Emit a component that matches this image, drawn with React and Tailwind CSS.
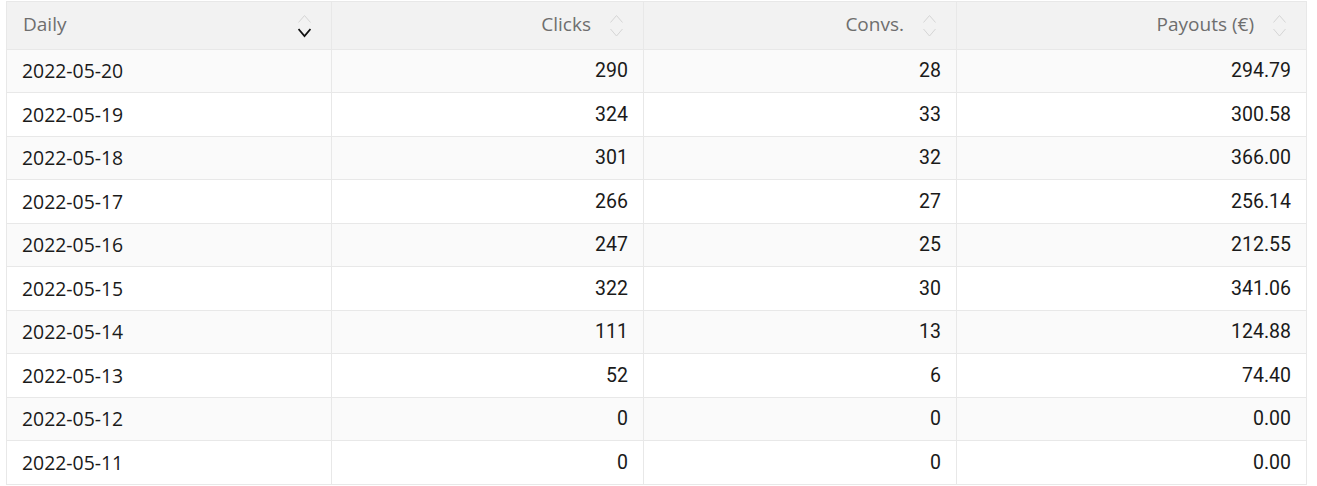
import React from "react";

const rows = [
  ["2022-05-20", "290", "28", "294.79"],
  ["2022-05-19", "324", "33", "300.58"],
  ["2022-05-18", "301", "32", "366.00"],
  ["2022-05-17", "266", "27", "256.14"],
  ["2022-05-16", "247", "25", "212.55"],
  ["2022-05-15", "322", "30", "341.06"],
  ["2022-05-14", "111", "13", "124.88"],
  ["2022-05-13", "52", "6", "74.40"],
  ["2022-05-12", "0", "0", "0.00"],
  ["2022-05-11", "0", "0", "0.00"],
];

function SortIcon({ active }) {
  return (
    <svg width="13" height="24" viewBox="0 0 13 24" className="shrink-0">
      <polyline
        points="0.5,8.5 6.5,1.5 12.5,8.5"
        fill="none"
        stroke={active === "up" ? "#111" : "#d6d6d6"}
        strokeWidth={active === "up" ? 1.8 : 1}
      />
      <polyline
        points="0.5,15 6.5,22 12.5,15"
        fill="none"
        stroke={active === "down" ? "#111" : "#d6d6d6"}
        strokeWidth={active === "down" ? 1.8 : 1}
      />
    </svg>
  );
}

const textFont = { fontFamily: '"Open Sans", "Noto Sans", sans-serif' };
const numFont = { fontFamily: 'Roboto, "Liberation Sans", sans-serif' };

export default function App() {
  return (
    <div className="bg-white w-[1317px] h-[486px] overflow-hidden pl-[6px] pt-[1px]">
      <div className="w-[1301px] border-l border-t border-r border-[#e8e8e8]">
        <div
          className="grid grid-cols-[325px_312px_313px_349px] h-[48px] bg-[#f2f2f2] border-b border-[#e8e8e8] text-[19px] text-[#6e6e6e]"
          style={textFont}
        >
          <div className="flex items-center justify-between pl-[16px] pr-[20px] border-r border-[#e8e8e8]">
            <span className="-mt-[2px]">Daily</span>
            <SortIcon active="down" />
          </div>
          <div className="flex items-center justify-end gap-[19px] pr-[20px] border-r border-[#e8e8e8]">
            <span className="-mt-[2px]">Clicks</span>
            <SortIcon />
          </div>
          <div className="flex items-center justify-end gap-[19px] pr-[20px] border-r border-[#e8e8e8]">
            <span className="-mt-[2px]">Convs.</span>
            <SortIcon />
          </div>
          <div className="flex items-center justify-end gap-[19px] pr-[20px]">
            <span className="-mt-[2px]">Payouts (€)</span>
            <SortIcon />
          </div>
        </div>
        {rows.map((r, i) => (
          <div
            key={r[0]}
            className={
              "grid grid-cols-[325px_312px_313px_349px] border-b border-[#e8e8e8] text-[#1a1a1a] " +
              (i % 2 === 0 ? "h-[43px] bg-[#fafafa]" : "h-[44px] bg-white")
            }
          >
            <div
              className="flex items-center pl-[15px] border-r border-[#e8e8e8] text-[19.4px]"
              style={textFont}
            >
              {r[0]}
            </div>
            <div
              className="flex items-center justify-end pr-[15px] border-r border-[#e8e8e8] text-[19.5px]"
              style={numFont}
            >
              {r[1]}
            </div>
            <div
              className="flex items-center justify-end pr-[15px] border-r border-[#e8e8e8] text-[19.5px]"
              style={numFont}
            >
              {r[2]}
            </div>
            <div
              className="flex items-center justify-end pr-[15px] text-[19.5px]"
              style={numFont}
            >
              {r[3]}
            </div>
          </div>
        ))}
      </div>
    </div>
  );
}
